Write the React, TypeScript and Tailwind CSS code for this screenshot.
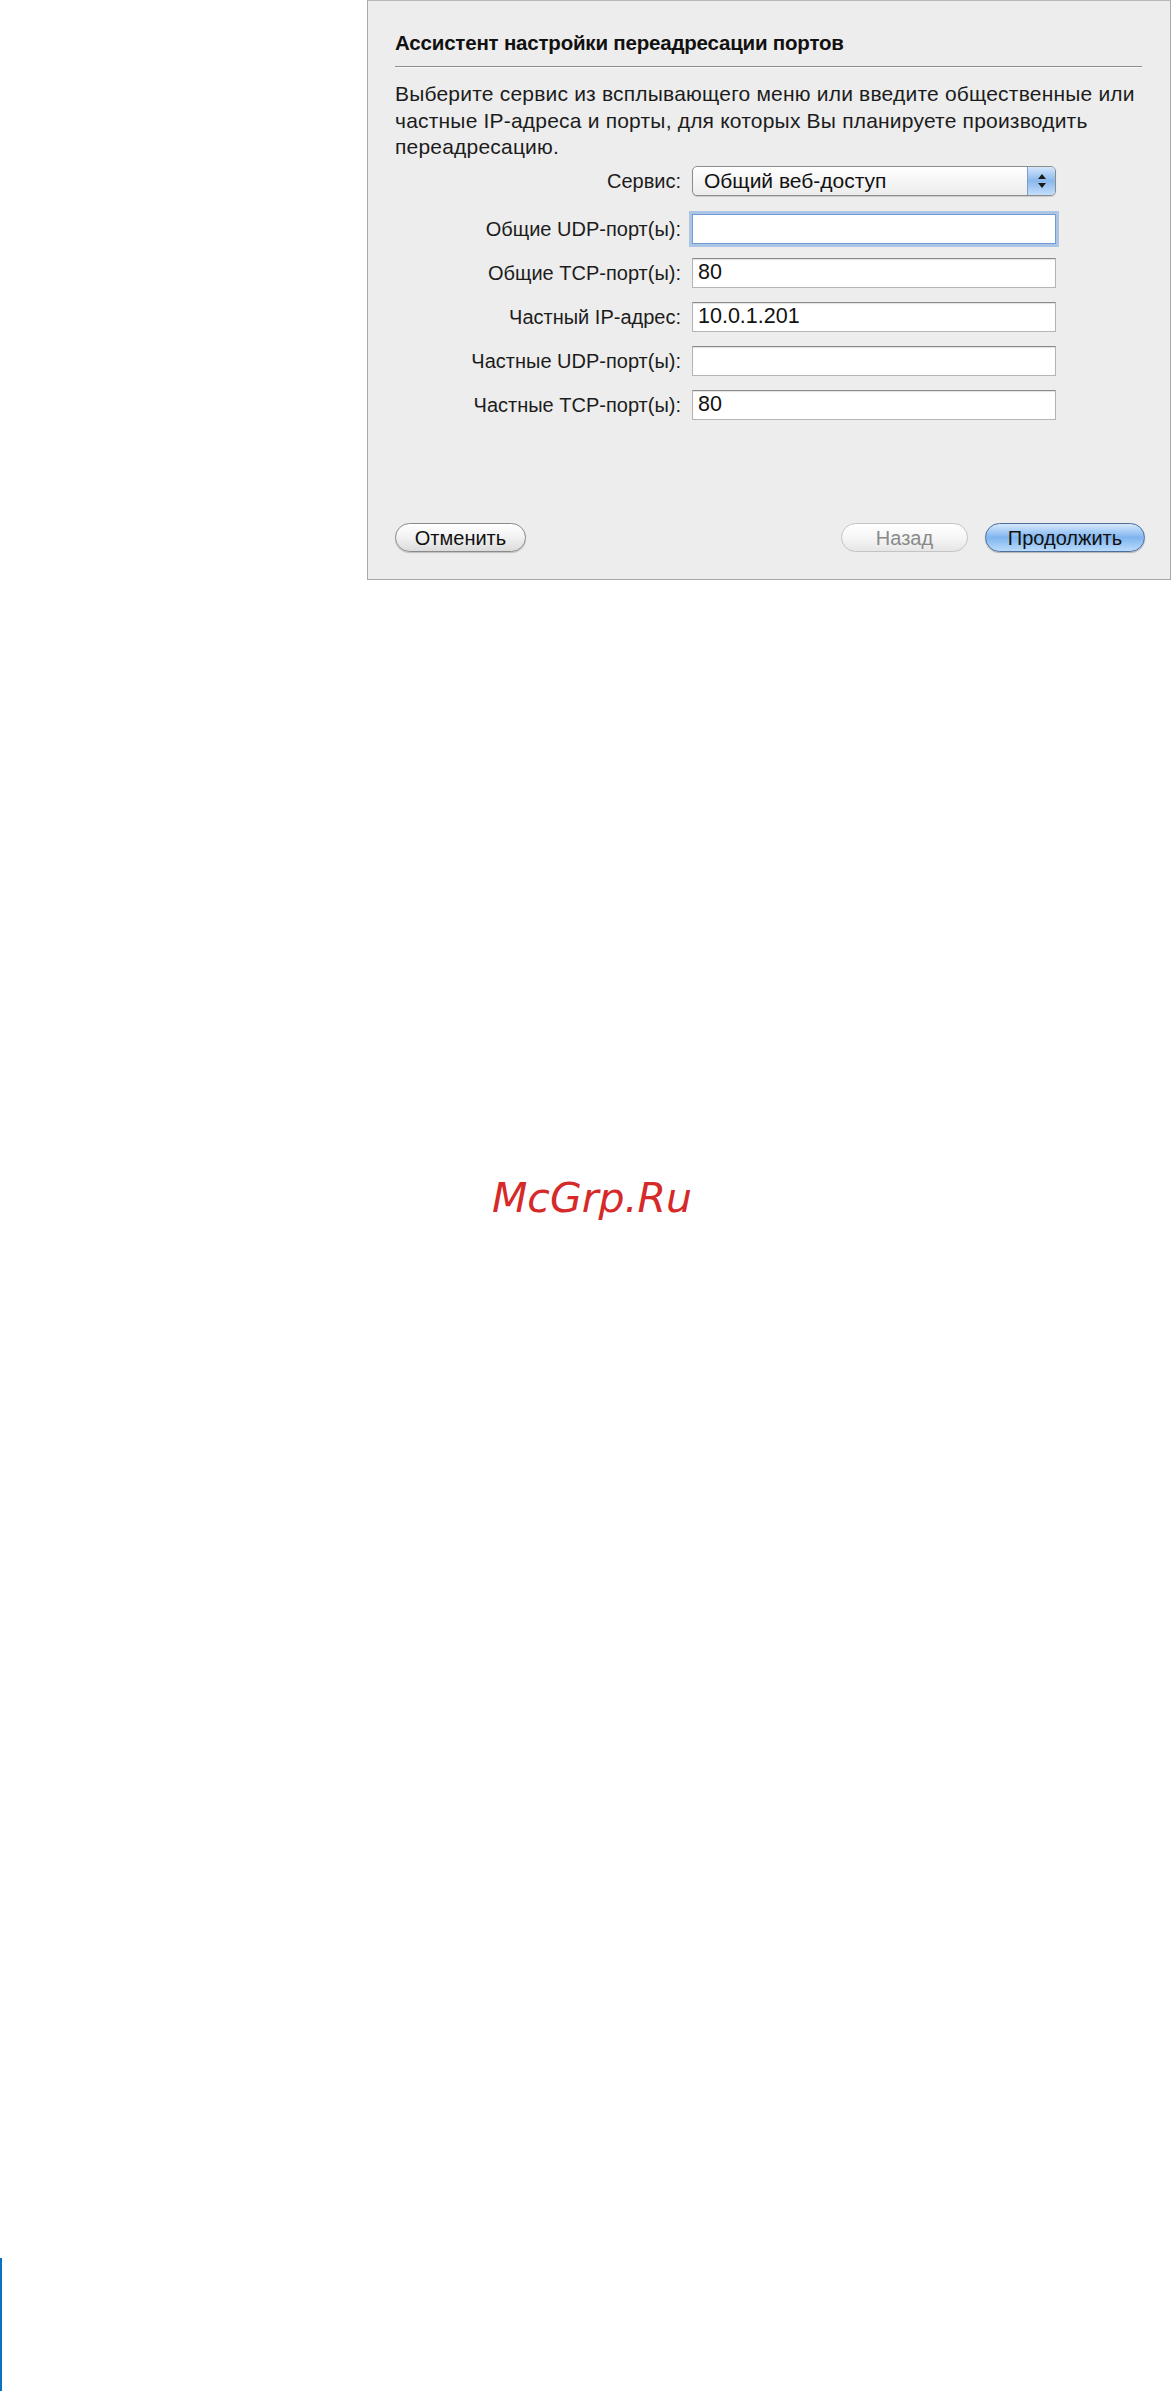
import React from "react";

const uiFont = { fontFamily: '"Liberation Sans", Arial, sans-serif' };

function Field({ label, value, focused }: { label: string; value?: string; focused?: boolean }) {
  return (
    <div className="flex items-center h-[30px]">
      <div className="w-[297px] text-right pr-[11px] text-[20px] leading-none text-[#1c1c1c]">{label}</div>
      <div
        className={
          focused
            ? "w-[364px] h-[30px] bg-white border border-[#6f9bd6] shadow-[0_0_0_3px_rgba(120,164,222,0.55)] flex items-center px-[5px] text-[21.5px]"
            : "w-[364px] h-[30px] bg-white border border-[#b5b5b5] border-t-[#8a8a8a] shadow-[inset_0_1px_1px_rgba(0,0,0,0.12)] flex items-center px-[5px] text-[21.5px] text-[#111]"
        }
      >
        {value}
      </div>
    </div>
  );
}

function PopupArrows() {
  return (
    <svg width="10" height="16" viewBox="0 0 10 16">
      <path d="M5 1 L9 6 L1 6 Z" fill="#1b1b1b" />
      <path d="M5 15 L9 10 L1 10 Z" fill="#1b1b1b" />
    </svg>
  );
}

export default function App() {
  return (
    <div className="w-[1172px] h-[2391px] bg-white flex flex-col" style={uiFont}>
      {/* Port forwarding assistant sheet */}
      <div className="ml-[367px] w-[804px] h-[580px] border border-[#a8a8a8] border-t-[#b8b8b8] bg-[#ededed] pl-[27px] pr-[28px] flex flex-col">
        <div className="mt-[30px] h-[24px] flex items-center text-[20.5px] font-bold text-[#111] tracking-[-0.2px]">
          Ассистент настройки переадресации портов
        </div>
        <div className="mt-[11px] h-[1px] bg-[#8e8e8e]" />
        <div className="h-[1px] bg-[#f8f8f8]" />
        <p className="mt-[13px] text-[21px] leading-[26.5px] tracking-[0.2px] text-[#1c1c1c]">
          Выберите сервис из всплывающего меню или введите общественные или частные IP-адреса и порты, для которых Вы планируете производить переадресацию.
        </p>

        <div className="mt-[5px] flex items-center h-[30px]">
          <div className="w-[297px] text-right pr-[11px] text-[20px] leading-none text-[#1c1c1c]">Сервис:</div>
          <div className="w-[364px] h-[30px] rounded-[5px] border border-[#8c8c8c] bg-gradient-to-b from-white to-[#ececec] shadow-[0_1px_1px_rgba(0,0,0,0.15)] flex overflow-hidden">
            <div className="flex-1 flex items-center pl-[11px] text-[21px] text-[#111]">Общий веб-доступ</div>
            <div className="w-[28px] border-l border-[#7d9cc6] bg-gradient-to-b from-[#d3e6fb] via-[#8ab8ec] to-[#c3defa] flex items-center justify-center">
              <PopupArrows />
            </div>
          </div>
        </div>

        <div className="mt-[18px] flex flex-col gap-[14px]">
          <Field label="Общие UDP-порт(ы):" focused />
          <Field label="Общие TCP-порт(ы):" value="80" />
          <Field label="Частный IP-адрес:" value="10.0.1.201" />
          <Field label="Частные UDP-порт(ы):" />
          <Field label="Частные TCP-порт(ы):" value="80" />
        </div>

        <div className="mt-auto mb-[27px] mr-[-3px] flex items-center">
          <div className="w-[131px] h-[29px] rounded-full border border-[#8a8a8a] bg-gradient-to-b from-white via-[#f1f1f1] to-[#dcdcdc] shadow-[0_1px_1px_rgba(0,0,0,0.2)] flex items-center justify-center text-[20px] text-[#111]">
            Отменить
          </div>
          <div className="flex-1" />
          <div className="w-[127px] h-[29px] rounded-full border border-[#c4c4c4] bg-gradient-to-b from-white via-[#f6f6f6] to-[#e6e6e6] flex items-center justify-center text-[20px] text-[#8a8a8a]">
            Назад
          </div>
          <div className="ml-[17px] w-[160px] h-[29px] rounded-full border border-[#4d6d9c] bg-gradient-to-b from-[#d6e9fc] via-[#7fb4ee] to-[#b9dbfb] shadow-[0_1px_1px_rgba(0,0,0,0.25)] flex items-center justify-center text-[20px] text-[#111]">
            Продолжить
          </div>
        </div>
      </div>

      {/* Site watermark */}
      <div
        className="ml-[492px] mt-[594px] text-[41px] leading-[48px] italic text-[#d62a2a]"
        style={{ fontFamily: '"DejaVu Sans", sans-serif' }}
      >
        McGrp.Ru
      </div>

      <div className="flex-1" />
      <div className="w-[2px] h-[133px] bg-[#0a72c0]" />
    </div>
  );
}
